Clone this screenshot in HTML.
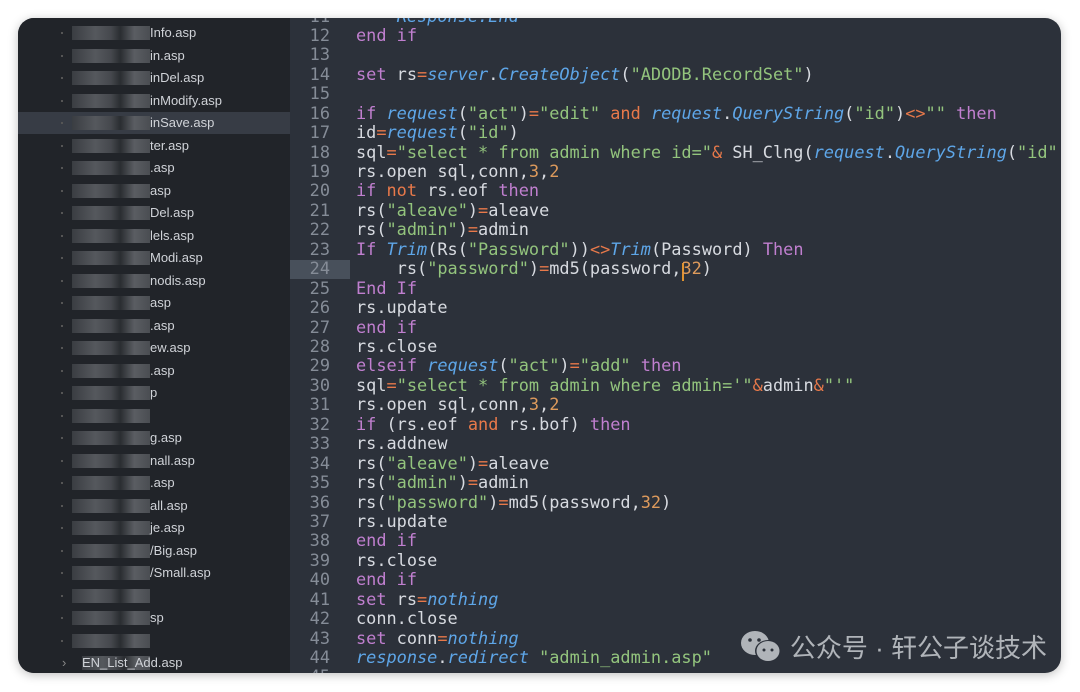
<!DOCTYPE html>
<html><head><meta charset="utf-8"><style>
body{margin:0;width:1080px;height:692px;background:#fff;overflow:hidden;position:relative}
.win{position:absolute;left:18px;top:18px;width:1043px;height:655px;border-radius:16px;overflow:hidden;background:#2c313a;box-shadow:0 2px 10px rgba(0,0,0,.25)}
.side{position:absolute;left:0;top:0;width:272px;height:100%;background:#212429;font-family:"Liberation Sans",sans-serif;font-size:13px;color:#d0d3d8}
.row{position:absolute;left:0;width:272px;height:22px;line-height:22px}
.row .t{position:absolute;left:132px}
.row .b{position:absolute;left:54px;top:4px;width:78px;height:14px;background:linear-gradient(90deg,#3a3d42,#55585d 30%,#45484d 50%,#2a2d31 62%,#5a5d62 80%,#4a4d52)}
.row .d{position:absolute;left:43px;top:10px;width:2px;height:2px;background:#555}
.sel{background:#373c45}
.ed{position:absolute;left:272px;top:0;right:0;height:100%;font-family:"DejaVu Sans Mono",monospace;font-size:16.9px;color:#d7dae0}
.ln{position:absolute;left:0;width:40px;text-align:right;color:#858c97;height:19.44px;line-height:19.44px}
.cl{position:absolute;left:66px;white-space:pre;height:19.44px;line-height:19.44px}
.k{color:#c07fcf}.f{color:#5ea6e8;font-style:italic}.s{color:#93c47d}.o{color:#e8794a}.n{color:#dd9a5c}
.wm{position:absolute;right:14px;bottom:8px;font-family:"Liberation Sans","Noto Sans CJK SC",sans-serif;font-size:26px;color:#b0b4b9;display:flex;align-items:center;gap:6px}
</style></head><body>
<div class="win">
<div class="side">
<div class="row" style="top:4px"><i class="d"></i><i class="b"></i><span class="t">Info.asp</span></div>
<div class="row" style="top:27px"><i class="d"></i><i class="b"></i><span class="t">in.asp</span></div>
<div class="row" style="top:49px"><i class="d"></i><i class="b"></i><span class="t">inDel.asp</span></div>
<div class="row" style="top:72px"><i class="d"></i><i class="b"></i><span class="t">inModify.asp</span></div>
<div class="row sel" style="top:94px"><i class="d"></i><i class="b"></i><span class="t">inSave.asp</span></div>
<div class="row" style="top:117px"><i class="d"></i><i class="b"></i><span class="t">ter.asp</span></div>
<div class="row" style="top:139px"><i class="d"></i><i class="b"></i><span class="t">.asp</span></div>
<div class="row" style="top:162px"><i class="d"></i><i class="b"></i><span class="t">asp</span></div>
<div class="row" style="top:184px"><i class="d"></i><i class="b"></i><span class="t">Del.asp</span></div>
<div class="row" style="top:207px"><i class="d"></i><i class="b"></i><span class="t">lels.asp</span></div>
<div class="row" style="top:229px"><i class="d"></i><i class="b"></i><span class="t">Modi.asp</span></div>
<div class="row" style="top:252px"><i class="d"></i><i class="b"></i><span class="t">nodis.asp</span></div>
<div class="row" style="top:274px"><i class="d"></i><i class="b"></i><span class="t">asp</span></div>
<div class="row" style="top:297px"><i class="d"></i><i class="b"></i><span class="t">.asp</span></div>
<div class="row" style="top:319px"><i class="d"></i><i class="b"></i><span class="t">ew.asp</span></div>
<div class="row" style="top:342px"><i class="d"></i><i class="b"></i><span class="t">.asp</span></div>
<div class="row" style="top:364px"><i class="d"></i><i class="b"></i><span class="t">p</span></div>
<div class="row" style="top:387px"><i class="d"></i><i class="b"></i><span class="t"></span></div>
<div class="row" style="top:409px"><i class="d"></i><i class="b"></i><span class="t">g.asp</span></div>
<div class="row" style="top:432px"><i class="d"></i><i class="b"></i><span class="t">nall.asp</span></div>
<div class="row" style="top:454px"><i class="d"></i><i class="b"></i><span class="t">.asp</span></div>
<div class="row" style="top:477px"><i class="d"></i><i class="b"></i><span class="t">all.asp</span></div>
<div class="row" style="top:499px"><i class="d"></i><i class="b"></i><span class="t">je.asp</span></div>
<div class="row" style="top:522px"><i class="d"></i><i class="b"></i><span class="t">/Big.asp</span></div>
<div class="row" style="top:544px"><i class="d"></i><i class="b"></i><span class="t">/Small.asp</span></div>
<div class="row" style="top:567px"><i class="d"></i><i class="b"></i><span class="t"></span></div>
<div class="row" style="top:589px"><i class="d"></i><i class="b"></i><span class="t">sp</span></div>
<div class="row" style="top:612px"><i class="d"></i><i class="b"></i><span class="t"></span></div>
<div class="row" style="top:634px"><span style="position:absolute;left:44px;color:#888">&#8250;</span><i class="b" style="left:64px;width:68px"></i><span class="t" style="left:64px">EN_List_Add.asp</span></div>
</div>
<div class="ed">
<div style="position:absolute;left:0;top:242px;width:60px;height:19.44px;background:#48505b"></div>
<div style="position:absolute;top:245px;width:2px;height:18px;background:#e0922f;left:392px"></div>
<div id="c"></div>
</div>
<div class="wm"><svg width="46" height="34" viewBox="0 0 46 34"><ellipse cx="17" cy="13" rx="14" ry="12" fill="#b0b4b9"/><ellipse cx="30" cy="21" rx="13" ry="11" fill="#2c313a"/><ellipse cx="30" cy="21" rx="11.5" ry="10" fill="#b0b4b9"/><circle cx="12" cy="10" r="1.8" fill="#2c313a"/><circle cx="21" cy="10" r="1.8" fill="#2c313a"/><circle cx="26" cy="20" r="1.5" fill="#2c313a"/><circle cx="34" cy="20" r="1.5" fill="#2c313a"/></svg><span>公众号 · 轩公子谈技术</span></div>
</div>
<script>
var L=[
'    <span class="f">Response.End</span>',
'<span class="k">end if</span>','',
'<span class="k">set</span> rs<span class="o">=</span><span class="f">server</span>.<span class="f">CreateObject</span>(<span class="s">"ADODB.RecordSet"</span>)','',
'<span class="k">if</span> <span class="f">request</span>(<span class="s">"act"</span>)<span class="o">=</span><span class="s">"edit"</span> <span class="o">and</span> <span class="f">request</span>.<span class="f">QueryString</span>(<span class="s">"id"</span>)<span class="o">&lt;&gt;</span><span class="s">""</span> <span class="k">then</span>',
'id<span class="o">=</span><span class="f">request</span>(<span class="s">"id"</span>)',
'sql<span class="o">=</span><span class="s">"select * from admin where id="</span><span class="o">&amp;</span> SH_Clng(<span class="f">request</span>.<span class="f">QueryString</span>(<span class="s">"id"</span>',
'rs.open sql,conn,<span class="n">3</span>,<span class="n">2</span>',
'<span class="k">if</span> <span class="o">not</span> rs.eof <span class="k">then</span>',
'rs(<span class="s">"aleave"</span>)<span class="o">=</span>aleave',
'rs(<span class="s">"admin"</span>)<span class="o">=</span>admin',
'<span class="k">If</span> <span class="f">Trim</span>(Rs(<span class="s">"Password"</span>))<span class="o">&lt;&gt;</span><span class="f">Trim</span>(Password) <span class="k">Then</span>',
'    rs(<span class="s">"password"</span>)<span class="o">=</span>md5(password,<span class="n">32</span>)',
'<span class="k">End If</span>','rs.update','<span class="k">end if</span>','rs.close',
'<span class="k">elseif</span> <span class="f">request</span>(<span class="s">"act"</span>)<span class="o">=</span><span class="s">"add"</span> <span class="k">then</span>',
'sql<span class="o">=</span><span class="s">"select * from admin where admin=\'"</span><span class="o">&amp;</span>admin<span class="o">&amp;</span><span class="s">"\'"</span>',
'rs.open sql,conn,<span class="n">3</span>,<span class="n">2</span>',
'<span class="k">if</span> (rs.eof <span class="o">and</span> rs.bof) <span class="k">then</span>',
'rs.addnew','rs(<span class="s">"aleave"</span>)<span class="o">=</span>aleave','rs(<span class="s">"admin"</span>)<span class="o">=</span>admin',
'rs(<span class="s">"password"</span>)<span class="o">=</span>md5(password,<span class="n">32</span>)',
'rs.update','<span class="k">end if</span>','rs.close','<span class="k">end if</span>',
'<span class="k">set</span> rs<span class="o">=</span><span class="f">nothing</span>','conn.close',
'<span class="k">set</span> conn<span class="o">=</span><span class="f">nothing</span>',
'<span class="f">response</span>.<span class="f">redirect</span> <span class="s">"admin_admin.asp"</span>','.'];
var h='';for(var i=0;i<L.length;i++){var t=(i*19.44-11.5).toFixed(2);h+='<div class="ln" style="top:'+t+'px">'+(i+11)+'</div><div class="cl" style="top:'+t+'px">'+L[i]+'</div>';}
document.getElementById('c').innerHTML=h;
</script>
</body></html>
